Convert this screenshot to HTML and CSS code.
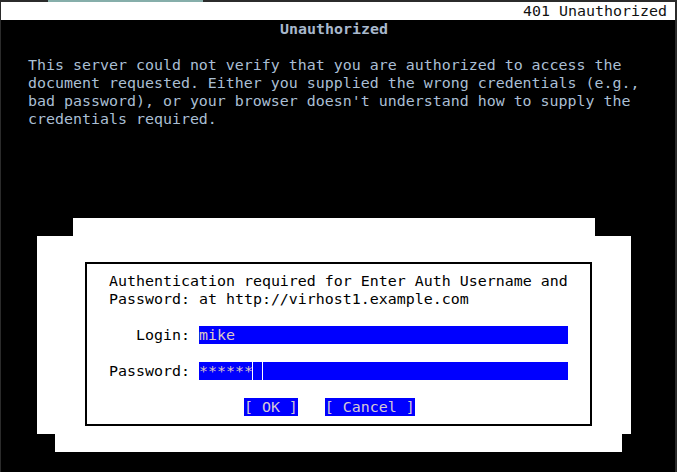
FILE: index.html
```html
<!DOCTYPE html>
<html>
<head>
<meta charset="utf-8">
<title>401 Unauthorized</title>
<link rel="stylesheet" href="styles.css">
</head>
<body>
<div class="frame-top"><span class="frame-accent"></span></div>
<div class="term">
  <div class="titlebar">401 Unauthorized</div>
  <div class="row heading">Unauthorized</div>
  <div class="row"></div>
  <div class="row body-text">This server could not verify that you are authorized to access the</div>
  <div class="row body-text">document requested. Either you supplied the wrong credentials (e.g.,</div>
  <div class="row body-text">bad password), or your browser doesn't understand how to supply the</div>
  <div class="row body-text">credentials required.</div>
  <div class="spacer"></div>
  <div class="dlg-top"></div>
  <div class="dlg-main">
    <div class="dlg-box">
      <div class="row">Authentication required for Enter Auth Username and</div>
      <div class="row">Password: at http://virhost1.example.com</div>
      <div class="row"></div>
      <div class="row">   Login: <span class="field">mike</span></div>
      <div class="row"></div>
      <div class="row">Password: <span class="field">******<span class="cursor"></span></span></div>
      <div class="row"></div>
      <div class="row">               <span class="btn">[ OK ]</span>   <span class="btn">[ Cancel ]</span></div>
    </div>
  </div>
  <div class="dlg-bottom"></div>
</div>
</body>
</html>
```
FILE: styles.css
```css
html, body {
  margin: 0;
  padding: 0;
}
body {
  background: #2b2b2b;
  width: 677px;
  height: 472px;
  overflow: hidden;
}
.frame-top {
  height: 2px;
  display: flex;
}
.frame-accent {
  margin-left: 48px;
  width: 155px;
  height: 2px;
  background: #86aeaa;
}
.term {
  margin-left: 1px;
  width: 674px;
  height: 470px;
  background: #000;
  font-family: "DejaVu Sans Mono", monospace;
  font-size: 14.95px;
  line-height: 18px;
  color: #aabfd4;
}
.titlebar {
  height: 18px;
  background: #fff;
  color: #111;
  text-align: right;
  padding-right: 8px;
  white-space: pre;
}
.row {
  height: 18px;
  white-space: pre;
}
.heading {
  padding-left: 279px;
  font-weight: bold;
  color: #a8b8cc;
}
.body-text {
  padding-left: 27px;
}
.spacer {
  height: 90px;
}
.dlg-top {
  margin-left: 72px;
  width: 522px;
  height: 18px;
  background: #fff;
}
.dlg-main {
  margin-left: 36px;
  width: 594px;
  height: 198px;
  box-sizing: border-box;
  padding-top: 26px;
  background: #fff;
}
.dlg-bottom {
  margin-left: 54px;
  width: 567px;
  height: 18px;
  background: #fff;
}
.dlg-box {
  margin-left: 48px;
  width: 507px;
  height: 164px;
  box-sizing: border-box;
  border: 2px solid #000;
  padding: 8px 0 8px 22px;
  color: #000;
}
.field {
  display: inline-block;
  vertical-align: top;
  width: 369px;
  height: 18px;
  background: #0000ff;
  color: #dcc8c4;
}
.cursor {
  display: inline-block;
  vertical-align: top;
  width: 9px;
  height: 18px;
  box-shadow: -1px 0 0 #fff, 1px 0 0 #fff;
}
.btn {
  display: inline-block;
  vertical-align: top;
  height: 18px;
  background: #0000ff;
  color: #d4c8d4;
}
```
